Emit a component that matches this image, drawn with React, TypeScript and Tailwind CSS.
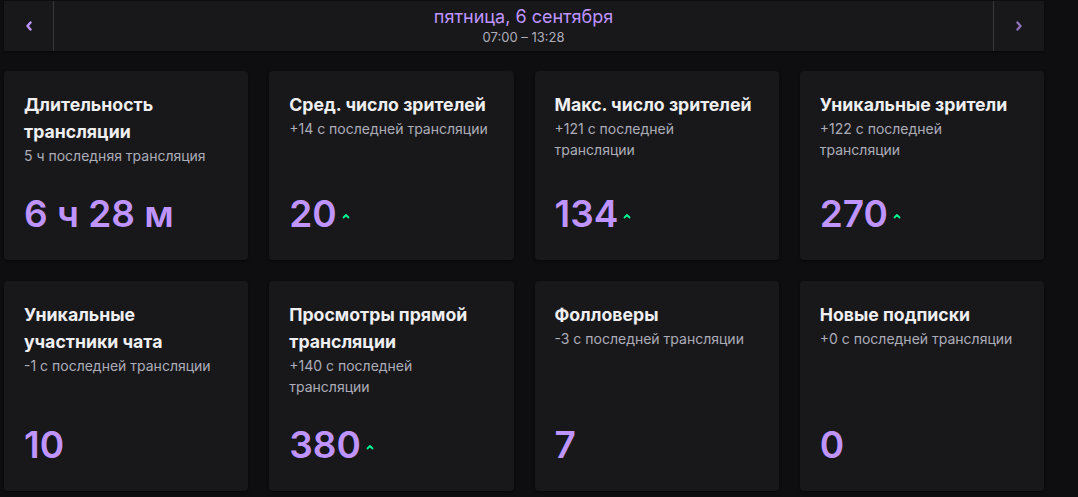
import React from "react";

type Stat = {
  title: string;
  sub: string;
  value: string;
  up?: boolean;
};

const stats: Stat[] = [
  { title: "Длительность трансляции", sub: "5 ч последняя трансляция", value: "6 ч 28 м" },
  { title: "Сред. число зрителей", sub: "+14 с последней трансляции", value: "20", up: true },
  { title: "Макс. число зрителей", sub: "+121 с последней трансляции", value: "134", up: true },
  { title: "Уникальные зрители", sub: "+122 с последней трансляции", value: "270", up: true },
  { title: "Уникальные участники чата", sub: "-1 с последней трансляции", value: "10" },
  { title: "Просмотры прямой трансляции", sub: "+140 с последней трансляции", value: "380", up: true },
  { title: "Фолловеры", sub: "-3 с последней трансляции", value: "7" },
  { title: "Новые подписки", sub: "+0 с последней трансляции", value: "0" },
];

function Chevron({ dir, dim }: { dir: "left" | "right"; dim?: boolean }) {
  return (
    <svg
      width="8"
      height="10"
      viewBox="0 0 8 10"
      className={dim ? "opacity-70" : ""}
    >
      <path
        d={dir === "left" ? "M5.5 1.5 L2.5 5 L5.5 8.5" : "M2.5 1.5 L5.5 5 L2.5 8.5"}
        fill="none"
        stroke="#bf94ff"
        strokeWidth="2.4"
        strokeLinecap="round"
        strokeLinejoin="round"
      />
    </svg>
  );
}

function UpCaret() {
  return (
    <svg width="10" height="8" viewBox="0 0 10 8" className="ml-[4px] mt-[3px]">
      <path
        d="M2.5 5.5 L5 3 L7.5 5.5"
        fill="none"
        stroke="#00f593"
        strokeWidth="1.8"
        strokeLinecap="round"
        strokeLinejoin="round"
      />
    </svg>
  );
}

function StatCard({ s }: { s: Stat }) {
  return (
    <div className="flex flex-col rounded-[4px] bg-[#18181b] pl-5 pr-[22px] pt-5 pb-6 shadow-[0_1px_3px_rgba(0,0,0,0.6)]">
      <div className="text-[17.7px] leading-[27px] font-bold text-[#efeff1]">{s.title}</div>
      <div className="text-[14px] leading-[21px] text-[#adadb8]">{s.sub}</div>
      <div className="mt-auto flex items-center pt-[26px]">
        <span className="text-[37px] leading-[44px] font-semibold text-[#bf94ff]">{s.value}</span>
        {s.up && <UpCaret />}
      </div>
    </div>
  );
}

export default function App() {
  return (
    <div
      className="min-h-screen bg-[#0e0e10] pt-px"
      style={{ fontFamily: "Inter, 'Noto Sans', 'Liberation Sans', sans-serif" }}
    >
      <div className="ml-1 w-[1040px]">
        <div className="flex h-[50px] bg-[#18181b] shadow-[0_1px_2px_rgba(0,0,0,0.5)]">
          <button className="flex w-[50px] items-center justify-center border-r border-[#35353b]">
            <Chevron dir="left" />
          </button>
          <div className="flex flex-1 flex-col items-center pt-[4px]">
            <div className="text-[18px] leading-[24px] text-[#bf94ff]">пятница, 6 сентября</div>
            <div className="text-[13px] leading-[17px] text-[#adadb8]">07:00 – 13:28</div>
          </div>
          <button className="flex w-[51px] items-center justify-center border-l border-[#35353b]">
            <Chevron dir="right" dim />
          </button>
        </div>

        <div className="mt-5 grid grid-cols-4 gap-x-[21px] gap-y-[21px]">
          {stats.map((s) => (
            <StatCard key={s.title} s={s} />
          ))}
        </div>
      </div>
    </div>
  );
}
